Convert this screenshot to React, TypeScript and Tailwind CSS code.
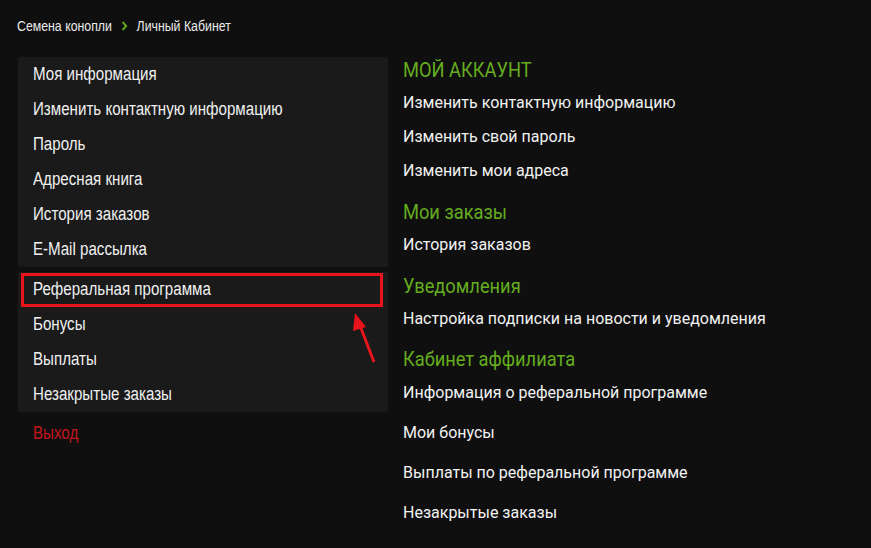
import React from 'react'

const groupA = ['Моя информация', 'Изменить контактную информацию', 'Пароль', 'Адресная книга', 'История заказов', 'E-Mail рассылка']
const groupB = ['Реферальная программа', 'Бонусы', 'Выплаты', 'Незакрытые заказы']

const sections: { title: string; links: string[]; wide?: boolean }[] = [
  { title: 'МОЙ АККАУНТ', links: ['Изменить контактную информацию', 'Изменить свой пароль', 'Изменить мои адреса'] },
  { title: 'Мои заказы', links: ['История заказов'] },
  { title: 'Уведомления', links: ['Настройка подписки на новости и уведомления'] },
  { title: 'Кабинет аффилиата', links: ['Информация о реферальной программе', 'Мои бонусы', 'Выплаты по реферальной программе', 'Незакрытые заказы'], wide: true },
]

// condensed sans: no narrow face installed, so squeeze Liberation Sans
function Narrow({ children }: { children: React.ReactNode }) {
  return (
    <span className="inline-block origin-left scale-x-[0.84] whitespace-nowrap font-['Liberation_Sans',Arial,sans-serif]">
      {children}
    </span>
  )
}

export default function App() {
  return (
    <div className="w-[871px] h-[548px] bg-[#0f0f0f] text-white overflow-hidden relative">
      {/* breadcrumb */}
      <div className="flex items-center h-[16px] mt-[18px] ml-[17px] origin-left scale-x-[0.88] font-['Liberation_Sans',Arial,sans-serif] text-[14px] text-[#ececec]">
        <span>Семена конопли</span>
        <svg width="8" height="10" viewBox="0 0 8 10" className="mx-[10px]">
          <path d="M2 1 L6 5 L2 9" stroke="#5fa81a" strokeWidth="2.2" fill="none" />
        </svg>
        <span>Личный Кабинет</span>
      </div>

      <div className="flex mt-[23px]">
        {/* sidebar */}
        <div className="w-[370px] ml-[18px] shrink-0">
          <div className="bg-[#1a1a1a] rounded-[3px]">
            {groupA.map(t => (
              <div key={t} className="h-[35px] flex items-center pl-[15px] text-[18px] text-[#f0f0f0]">
                <Narrow>{t}</Narrow>
              </div>
            ))}
          </div>
          <div className="bg-[#1a1a1a] rounded-[3px] mt-[5px]">
            {groupB.map((t, i) => (
              <div key={t} className="h-[35px] flex items-center pl-[15px] text-[18px] text-[#f0f0f0] relative">
                <Narrow>{t}</Narrow>
                {i === 0 && <div className="absolute left-[3px] top-[1px] w-[362px] h-[34px] border-[3px] border-[#e8141c]" />}
              </div>
            ))}
          </div>
          <div className="h-[36px] mt-[3px] flex items-center pl-[15px] text-[18px] text-[#c4161c]">
            <Narrow>Выход</Narrow>
          </div>
        </div>

        {/* right column */}
        <div className="ml-[15px] -mt-[1px] font-['Roboto',sans-serif]">
          {sections.map((s, i) => (
            <div key={s.title} className={i < sections.length - 1 ? 'mb-[10px]' : ''}>
              <div className={`${s.wide ? 'h-[27px]' : 'h-[30px]'} flex items-center text-[21px] text-[#65ad1f]`}>
                <span className="inline-block origin-left scale-x-[0.87] whitespace-nowrap">{s.title}</span>
              </div>
              {s.links.map(l => (
                <div key={l} className={`${s.wide ? 'h-[40px]' : 'h-[34px]'} flex items-center text-[16px] text-[#f2f2f2]`}>{l}</div>
              ))}
            </div>
          ))}
        </div>
      </div>

      {/* annotation arrow */}
      <svg className="absolute left-[345px] top-[305px]" width="40" height="62" viewBox="0 0 40 62">
        <line x1="29" y1="57" x2="14" y2="18" stroke="#e8141c" strokeWidth="3" />
        <polygon points="10,8 21,22 8,26" fill="#e8141c" />
      </svg>
    </div>
  )
}
